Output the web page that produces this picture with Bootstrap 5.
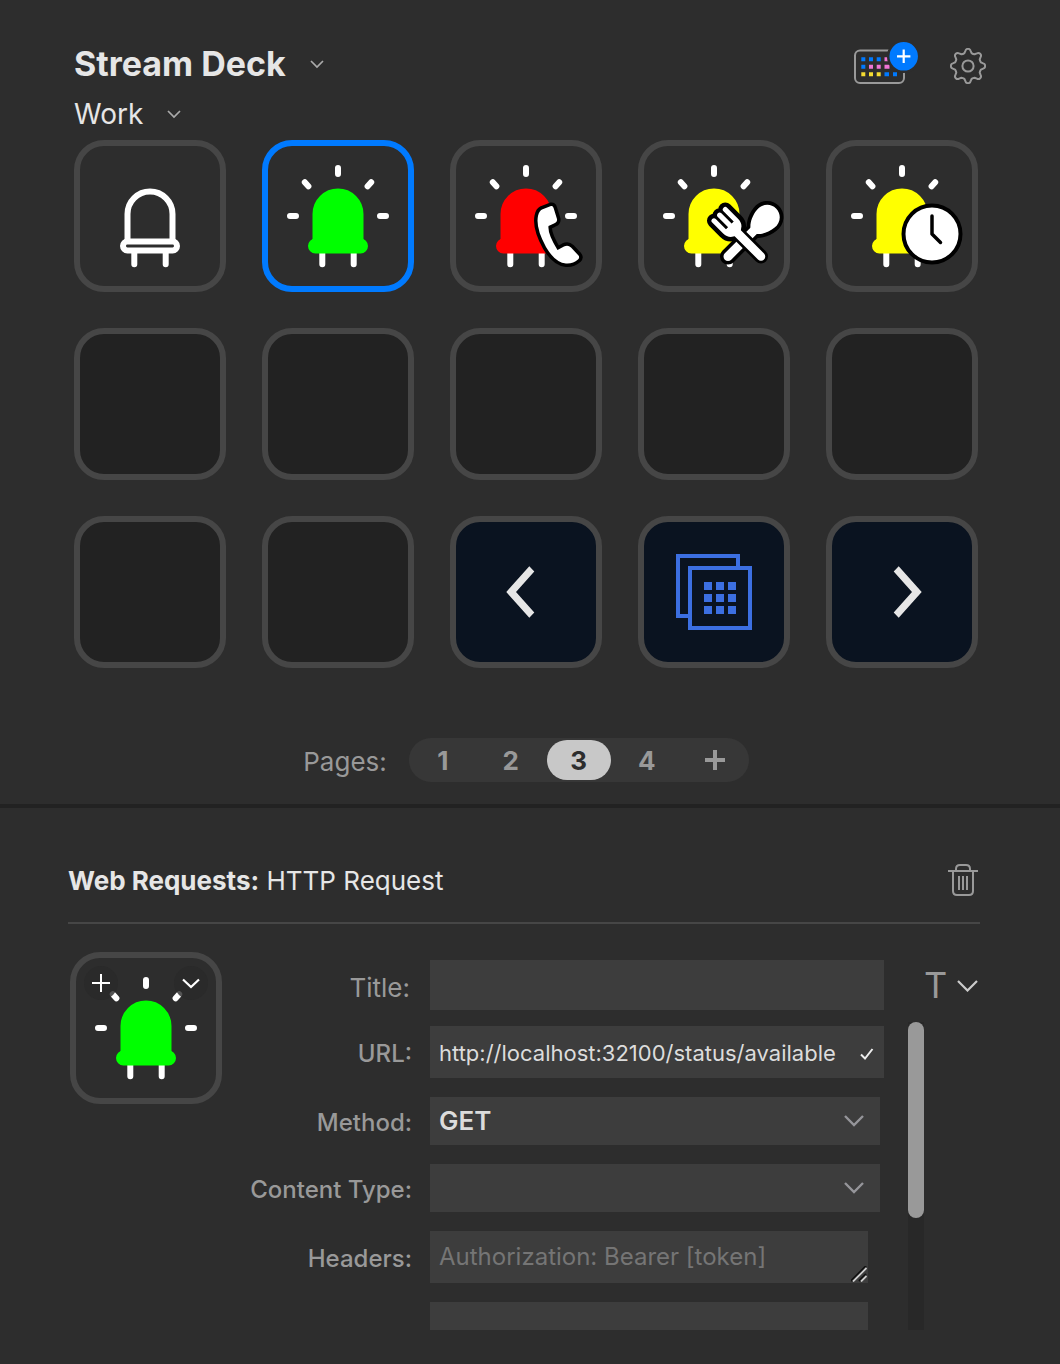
<!DOCTYPE html>
<html lang="en">
<head>
<meta charset="utf-8">
<meta name="viewport" content="width=device-width, initial-scale=1">
<title>Stream Deck</title>
<link href="https://cdn.jsdelivr.net/npm/bootstrap@5.3.0/dist/css/bootstrap.min.css" rel="stylesheet">
<style>
body{background:#2d2d2d;color:#e6e6e6;font-family:Inter,"Liberation Sans",sans-serif}
svg{display:block;flex:none}
button{color:inherit}
.plain-btn{background:none;border:0;padding:0}
.deck{padding:42px 74px 22px;border-bottom:4px solid #222}
.deck-name,.profile-name{gap:21px}
.deck-name{font-size:34px;font-weight:700;line-height:44px}
.profile-name{font-size:28px;line-height:40px}
.keys{display:grid;grid-template-columns:repeat(5,minmax(0,1fr));gap:36px;margin:6px 8px 0 0}
.key{aspect-ratio:1;border:6px solid #464646;border-radius:30px;background:#2d2d2d;padding:0;overflow:hidden}
.key svg{width:100%;height:100%}
.key-empty{background:#222}
.key-nav{background:#0a1320}
.key-on{border-color:#007aff}
.pages{margin:70px 8px 0 0;gap:22px;font-size:26px;color:#999}
.pages-label{padding-top:3px}
.pager{background:#373737;border-radius:22px;height:44px}
.pager button{width:64px;height:40px;margin:2px;border-radius:20px;font-size:26px;font-weight:700;color:#999;line-height:42px}
.pager .current{background:#c8c8c8;color:#2d2d2d}
.inspector{padding:52px 80px 34px 68px}
.action-head{border-bottom:2px solid #464646;padding-bottom:20px;margin-bottom:28px;font-size:26px;line-height:42px}
.preview{width:152px;margin-left:2px}
.round-btn{position:absolute;top:8px;width:34px;height:34px;border-radius:50%;background:#292929cc;display:grid;place-items:center}
.round-btn svg{width:20px;height:20px}
.settings{padding-top:8px}
.line-label{width:190px;padding-top:4px;margin-right:18px;text-align:right;font-size:24px;font-weight:500;color:#999;flex:none}
.line-label.thin{font-size:26px;font-weight:400;padding-right:2px}
.field,.field:focus{background-color:#3d3d3d;border:0;border-radius:0;color:#dcdcdc;padding:0 9px;font-size:24px;box-shadow:none}
.field::placeholder{color:#757575}
.h-title{height:50px}
.h-text{height:52px}
input.url-field{font-size:22px;padding:2px 32px 0 9px}
textarea.field{resize:none;line-height:52px;overflow:hidden}
select.field{height:48px;font-size:26px;font-weight:600;line-height:48px;background-repeat:no-repeat;background-position:right 16px center;background-size:20px 12px;
background-image:url("data:image/svg+xml,%3Csvg xmlns='http://www.w3.org/2000/svg' viewBox='0 0 20 12'%3E%3Cpath d='M1 1l9 9 9-9' fill='none' stroke='%2395959a' stroke-width='2.4'/%3E%3C/svg%3E")}
.scroller{height:308px;margin:12px 56px 0 0;gap:24px}
.rows{overflow:hidden;padding-top:4px;gap:19px}
.select-wrap{padding-right:4px}
.area-wrap{padding-right:16px}
.tick{position:absolute;right:9px;top:20px}
.grip{position:absolute;right:17px;bottom:1px}
.track{width:16px;background:#282828;flex:none}
.thumb{height:196px;border-radius:8px;background:#999}
.font-btn{width:56px;margin-left:40px;color:#999;font-size:36px;line-height:50px}
</style>
</head>
<body>
<svg width="0" height="0" class="position-absolute" aria-hidden="true">
  <defs>
    <g id="legs" fill="none" stroke="#fff" stroke-width="6" stroke-linecap="round"><path d="M54.3 106v12.3M85.7 106v12.3"/></g>
    <g id="rays" fill="none" stroke="#fff" stroke-width="6" stroke-linecap="round"><path d="M70 22v6M22 70h6M112 70h6M36.8 36.2l3.6 4M103.2 36.2l-3.6 4"/></g>
    <g id="bulb" stroke-width="6"><path d="M47.5 95.5V68a22.5 22.5 0 0 1 45 0v27.5"/><rect x="43" y="95.6" width="54" height="8.8" rx="4.4"/></g>
    <g id="lit"><use href="#rays"/><use href="#legs"/><use href="#bulb"/></g>
    <path id="handset" d="M86 63.500L95 60Q97 59.500 97.600 62L101 73Q101.500 76.500 98 77.500L92.500 80Q91.500 88 101.500 104L108 100.500Q112 98.500 115 101.500L122.500 109.500Q124 111.500 122 113.500Q117 118 110 117.500Q99 116.500 90 101Q79.500 82 82 70Q83 65 86 63.500Z"/>
    <g id="fork" stroke-linecap="round" stroke-linejoin="round"><path d="M-8-58.500V-43Q-8-36 0-34Q8-36 8-43V-58.500M0-58.500V0" fill="none"/></g>
  </defs>
</svg>

<main>
<section class="deck">
  <header class="d-flex justify-content-between align-items-start">
    <div>
      <button class="plain-btn d-flex align-items-center deck-name">Stream Deck
        <svg width="20" height="12" viewBox="0 0 20 12"><path d="M4 3l6 6 6-6" fill="none" stroke="#aaa" stroke-width="1.700"/></svg></button>
      <button class="plain-btn d-flex align-items-center profile-name mt-2">Work
        <svg width="20" height="12" viewBox="0 0 20 12"><path d="M4 3l6 6 6-6" fill="none" stroke="#aaa" stroke-width="1.700"/></svg></button>
    </div>
    <div class="d-flex align-items-center">
      <button class="plain-btn" aria-label="Add device">
        <svg width="64" height="44" viewBox="0 0 64 44">
          <rect x="1" y="8.500" width="49" height="32.500" rx="5" fill="none" stroke="#999" stroke-width="2"/>
          <g fill="#007aff"><path d="M7.300 15.300h4v4h-4zM15 15.300h4v4h-4zM22.700 15.300h4v4h-4zM7.300 22.700h4v4h-4zM30.500 30.300h4.500v4h-4.500zM39 30.300h4v4h-4z"/></g>
          <g fill="#f075d6"><path d="M30.500 15.300h4v4h-4zM15 22.700h4v4h-4zM22.700 22.700h4v4h-4zM30.500 22.700h5v4h-5z"/></g>
          <g fill="#f5dc32"><path d="M7.300 30.300h4v4h-4zM15 30.300h4v4h-4zM22.700 30.300h4v4h-4z"/></g>
          <circle cx="49.700" cy="14.300" r="15.500" fill="#007aff" stroke="#2d2d2d" stroke-width="2.500"/>
          <path d="M49.700 7.600v13.400M43 14.300h13.400" stroke="#fff" stroke-width="2.200"/>
        </svg></button>
      <button class="plain-btn ms-4 ps-2 mt-1" aria-label="Settings">
        <svg width="36" height="36" viewBox="-18 -18 36 36" fill="none" stroke="#999" stroke-width="2" stroke-linejoin="round">
          <path d="M-3.600-12.900L-2.600-15.200A2.700 2.700 0 0 1 2.600-15.200L3.600-12.900Q5-11.900 6.600-11.700L8.900-12.600A2.700 2.700 0 0 1 12.600-8.900L11.700-6.600Q11.900-5 12.900-3.600L15.200-2.600A2.700 2.700 0 0 1 15.200 2.600L12.900 3.600Q11.900 5 11.700 6.600L12.600 8.900A2.700 2.700 0 0 1 8.900 12.600L6.600 11.700Q5 11.900 3.600 12.900L2.600 15.200A2.700 2.700 0 0 1-2.600 15.200L-3.600 12.900Q-5 11.900-6.600 11.700L-8.900 12.600A2.700 2.700 0 0 1-12.600 8.900L-11.700 6.600Q-11.900 5-12.900 3.600L-15.200 2.600A2.700 2.700 0 0 1-15.200-2.600L-12.900-3.600Q-11.900-5-11.700-6.600L-12.600-8.900A2.700 2.700 0 0 1-8.900-12.600L-6.600-11.700Q-5-11.900-3.600-12.900Z"/><circle r="5.600"/>
        </svg></button>
    </div>
  </header>

  <div class="keys">
    <button class="key" aria-label="Off"><svg viewBox="0 0 140 140"><use href="#legs"/><use href="#bulb" fill="none" stroke="#fff"/></svg></button>
    <button class="key key-on" aria-label="Available"><svg viewBox="0 0 140 140"><use href="#lit" fill="#0f0" stroke="#0f0"/></svg></button>
    <button class="key" aria-label="On a call"><svg viewBox="0 0 140 140"><use href="#lit" fill="#f00" stroke="#f00"/><use href="#handset" stroke="#000" stroke-width="7" stroke-linejoin="round"/><use href="#handset" fill="#fff"/></svg></button>
    <button class="key" aria-label="Lunch"><svg viewBox="0 0 140 140"><use href="#lit" fill="#ff0" stroke="#ff0"/>
      <g transform="translate(84 110.500) rotate(45)"><path d="M0 0V-38" stroke="#000" stroke-width="16" stroke-linecap="round"/><path d="M0-68C8-68 13.500-61 12.500-53C11.500-44 6-35 0-34C-6-35-11.500-44-12.500-53C-13.500-61-8-68 0-68Z" fill="#fff" stroke="#000" stroke-width="7.500" paint-order="stroke"/><path d="M0 0V-38" stroke="#fff" stroke-width="9" stroke-linecap="round"/></g>
      <g transform="translate(117 110.500) rotate(-45)"><use href="#fork" stroke="#000" stroke-width="14"/><use href="#fork" stroke="#fff" stroke-width="5"/><path d="M0 0V-38" stroke="#fff" stroke-width="8.500" stroke-linecap="round"/><path d="M-8-43H8Q8-36 0-34Q-8-36-8-43Z" fill="#fff" stroke="#fff" stroke-width="2"/></g></svg></button>
    <button class="key" aria-label="Away"><svg viewBox="0 0 140 140"><use href="#lit" fill="#ff0" stroke="#ff0"/><circle cx="100" cy="88" r="28.500" fill="#fff" stroke="#000" stroke-width="4"/><path d="M100 70v18l8.500 8.500" fill="none" stroke="#000" stroke-width="3.500" stroke-linecap="round" stroke-linejoin="round"/></svg></button>

    <button class="key key-empty" aria-label="Empty key"></button>
    <button class="key key-empty" aria-label="Empty key"></button>
    <button class="key key-empty" aria-label="Empty key"></button>
    <button class="key key-empty" aria-label="Empty key"></button>
    <button class="key key-empty" aria-label="Empty key"></button>

    <button class="key key-empty" aria-label="Empty key"></button>
    <button class="key key-empty" aria-label="Empty key"></button>
    <button class="key key-nav" aria-label="Previous page"><svg viewBox="0 0 140 140"><path d="M50.300 70L73.300 44.200l5 5.300L60 70l18.300 20.500-5 5.300z" fill="#e6e6e6"/></svg></button>
    <button class="key key-nav" aria-label="Go to page"><svg viewBox="0 0 140 140" fill="#3c6fe1"><path d="M94 44V34H34v60h10M46 46h60v60H46z" fill="none" stroke="#3c6fe1" stroke-width="4"/><path d="M60 60h8v8h-8zM72 60h8v8h-8zM84 60h8v8h-8zM60 72h8v8h-8zM72 72h8v8h-8zM84 72h8v8h-8zM60 84h8v8h-8zM72 84h8v8h-8zM84 84h8v8h-8z"/></svg></button>
    <button class="key key-nav" aria-label="Next page"><svg viewBox="0 0 140 140"><path d="M89.700 70L66.700 44.200l-5 5.300L80 70 61.700 90.500l5 5.300z" fill="#e6e6e6"/></svg></button>
  </div>

  <nav class="pages d-flex justify-content-center align-items-center" aria-label="Pages">
    <span class="pages-label">Pages:</span>
    <div class="pager d-flex">
      <button class="plain-btn">1</button>
      <button class="plain-btn">2</button>
      <button class="plain-btn current" aria-current="page">3</button>
      <button class="plain-btn">4</button>
      <button class="plain-btn d-flex align-items-center justify-content-center" aria-label="Add page"><svg width="20" height="20" viewBox="0 0 20 20"><path d="M10 0v20M0 10h20" stroke="#999" stroke-width="4"/></svg></button>
    </div>
  </nav>
</section>

<section class="inspector">
  <div class="action-head d-flex justify-content-between align-items-center">
    <div><strong>Web Requests:</strong> HTTP Request</div>
    <button class="plain-btn" aria-label="Delete"><svg width="32" height="34" viewBox="0 0 32 34" fill="none" stroke="#999" stroke-width="2"><path d="M0 7h30M8 7V5q0-4 4-4h6q4 0 4 4v2M5 7v20q0 4 4 4h12q4 0 4-4V7"/><path d="M11 12v14M15 12v14M19 12v14"/></svg></button>
  </div>

  <div class="d-flex align-items-start">
    <div class="key preview position-relative flex-shrink-0">
      <svg viewBox="0 0 140 140" role="img" aria-label="Key icon"><use href="#lit" fill="#0f0" stroke="#0f0"/></svg>
      <button class="plain-btn round-btn start-0 ms-2" aria-label="Add state"><svg viewBox="0 0 20 20"><path d="M10 1v18M1 10h18" stroke="#fff" stroke-width="2"/></svg></button>
      <button class="plain-btn round-btn end-0 me-2" aria-label="Icon menu"><svg viewBox="0 0 20 20"><path d="M2 6.500l8 7.500 8-7.500" fill="none" stroke="#fff" stroke-width="2.200"/></svg></button>
    </div>

    <form class="settings flex-grow-1">
      <div class="d-flex align-items-center">
        <label class="line-label thin" for="title">Title:</label>
        <input id="title" type="text" class="form-control field h-title">
        <button type="button" class="plain-btn font-btn h-title d-flex align-items-center justify-content-between flex-shrink-0" aria-label="Title style"><span>T</span><svg width="24" height="14" viewBox="0 0 24 14"><path d="M2 3l9.500 9.500L21 3" fill="none" stroke="#ccc" stroke-width="2.200"/></svg></button>
      </div>
      <div class="scroller d-flex">
        <div class="rows d-flex flex-column flex-grow-1">
          <div class="d-flex align-items-center flex-shrink-0">
            <label class="line-label" for="url">URL:</label>
            <div class="flex-grow-1 position-relative">
              <input id="url" type="text" class="form-control field h-text url-field" value="http://localhost:32100/status/available">
              <svg class="tick" width="16" height="16" viewBox="0 0 16 16"><path d="M2 8.500l4 4L13.500 3" fill="none" stroke="#eee" stroke-width="2"/></svg>
            </div>
          </div>
          <div class="d-flex align-items-center flex-shrink-0">
            <label class="line-label" for="method">Method:</label>
            <div class="flex-grow-1 select-wrap"><select id="method" class="form-select field"><option>GET</option><option>POST</option></select></div>
          </div>
          <div class="d-flex align-items-center flex-shrink-0">
            <label class="line-label" for="ctype">Content Type:</label>
            <div class="flex-grow-1 select-wrap"><select id="ctype" class="form-select field"><option></option></select></div>
          </div>
          <div class="d-flex align-items-center flex-shrink-0">
            <label class="line-label" for="headers">Headers:</label>
            <div class="flex-grow-1 area-wrap position-relative">
              <textarea id="headers" rows="1" class="form-control field h-text" placeholder="Authorization: Bearer [token]"></textarea>
              <svg class="grip" width="16" height="16" viewBox="0 0 16 16"><path d="M0 15L15 0M8 15l7-7" stroke="#111" stroke-width="2"/><path d="M2 15.500L15.500 2M10 15.500l5.500-5.500" stroke="#ccc" stroke-width="1.800"/></svg>
            </div>
          </div>
          <div class="d-flex flex-shrink-0">
            <span class="line-label"></span>
            <div class="flex-grow-1 area-wrap"><textarea aria-label="Body" rows="1" class="form-control field h-text"></textarea></div>
          </div>
        </div>
        <div class="track"><div class="thumb"></div></div>
      </div>
    </form>
  </div>
</section>
</main>
<script src="https://cdn.jsdelivr.net/npm/bootstrap@5.3.0/dist/js/bootstrap.bundle.min.js"></script>
</body>
</html>
